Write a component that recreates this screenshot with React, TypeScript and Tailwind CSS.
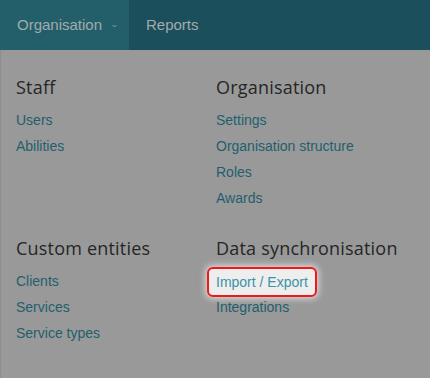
import React from "react";

const linkCls = "text-[14px] leading-[26px] text-[#1f5f6d] block";
const headCls = "text-[18px] leading-[24px] text-[#262626] mb-[8px] tracking-[0.2px]";

function Col({ title, links, highlight }: { title: string; links: string[]; highlight?: string }) {
  return (
    <div className="flex flex-col">
      <div className={headCls} style={{ fontFamily: '"Open Sans", sans-serif' }}>{title}</div>
      {links.map((l) =>
        l === highlight ? (
          <div key={l} className="flex h-[26px]">
            <span className="-ml-[9px] -mt-[1px] h-[30px] px-[7px] rounded-[6px] border-2 border-[#f01818] bg-[#eeeeee] text-[#3a93a6] text-[14px] leading-[26px] shadow-[0_0_6px_2px_rgba(255,255,255,0.6)]">
              {l}
            </span>
          </div>
        ) : (
          <a key={l} className={linkCls}>{l}</a>
        )
      )}
    </div>
  );
}

export default function App() {
  return (
    <div className="w-[430px] h-[378px] bg-[#999999] flex flex-col border-l border-[#8e8e8e]" style={{ fontFamily: '"Liberation Sans", Arial, sans-serif' }}>
      <div className="h-[50px] bg-[#1b4f5c] flex items-stretch text-[15px] text-[#a3abab] -ml-px">
        <div className="bg-[#225f6a] flex items-center pl-[17px] pr-[12px] w-[129px]">
          <span>Organisation</span>
          <svg className="ml-[10px] mt-[2px]" width="8" height="6" viewBox="0 0 8 6" fill="none">
            <path d="M1 1.5l3 3 3-3" stroke="#a3abab" strokeWidth="1.5" />
          </svg>
        </div>
        <div className="flex items-center pl-[17px]">Reports</div>
      </div>
      <div className="grid grid-cols-[200px_200px] pl-[15px] pt-[25px] gap-y-[25px]">
        <Col title="Staff" links={["Users", "Abilities"]} />
        <Col title="Organisation" links={["Settings", "Organisation structure", "Roles", "Awards"]} />
        <Col title="Custom entities" links={["Clients", "Services", "Service types"]} />
        <Col title="Data synchronisation" links={["Import / Export", "Integrations"]} highlight="Import / Export" />
      </div>
    </div>
  );
}
